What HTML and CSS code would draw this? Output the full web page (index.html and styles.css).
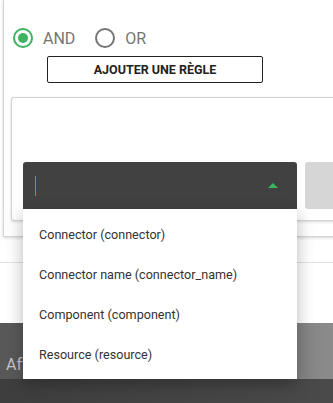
FILE: index.html
```html
<!DOCTYPE html>
<html lang="fr">
<head>
  <meta charset="UTF-8" />
  <meta name="viewport" content="width=device-width, initial-scale=1.0"/>
  <title>Règles</title>
  <link rel="stylesheet" href="styles.css">
</head>
<body>
  <div class="panel">
    <div class="combinator">
      <label class="radio checked"><span class="dot"></span>AND</label>
      <label class="radio"><span class="dot"></span>OR</label>
    </div>
    <button class="add-rule">AJOUTER UNE RÈGLE</button>

    <div class="rule-card">
      <div class="rule-row">
        <div class="field-select">
          <span class="caret"></span>
          <span class="arrow"></span>
          <ul class="menu">
            <li>Connector (connector)</li>
            <li>Connector name (connector_name)</li>
            <li>Component (component)</li>
            <li>Resource (resource)</li>
          </ul>
        </div>
        <div class="operator"></div>
      </div>
    </div>
  </div>

  <div class="divider"></div>

  <div class="footer-bar">
    <span class="footer-text">Aff</span>
  </div>
</body>
</html>
```

FILE: styles.css
```css
body { margin: 0; font-family: Roboto, "Liberation Sans", sans-serif; background: #fff; overflow: hidden; width: 333px; height: 403px; }

.panel { margin-left: 3px; width: 360px; border: 1px solid #d4d4d4; border-top: 0; box-shadow: 0 1px 3px rgba(0,0,0,0.15); padding: 28px 0 15px 7px; box-sizing: border-box; }

.combinator { display: flex; align-items: center; height: 20px; padding-left: 2px; }
.radio { display: flex; align-items: center; font-size: 16px; color: #757575; margin-right: 20px; }
.radio .dot { width: 20px; height: 20px; box-sizing: border-box; border: 2px solid #757575; border-radius: 50%; margin-right: 10px; position: relative; }
.radio.checked .dot { border-color: #3db35f; }
.radio.checked .dot::after { content: ''; position: absolute; left: 3px; top: 3px; width: 10px; height: 10px; border-radius: 50%; background: #3db35f; }

.add-rule { display: block; margin: 8px 0 0 36px; width: 216px; height: 27px; background: #fff; border: 1px solid #222; border-radius: 2px; font-family: Roboto, "Liberation Sans", sans-serif; font-weight: 700; font-size: 12.5px; color: #222; padding: 0; }

.rule-card { margin-top: 14px; border: 1px solid #d4d4d4; border-right: 0; border-radius: 3px 0 0 3px; box-shadow: 0 1px 3px rgba(0,0,0,0.15); padding: 64px 0 11px 11px; }
.rule-row { display: flex; gap: 8px; }

.field-select { position: relative; width: 274px; height: 47px; background: #414141; border-radius: 3px 3px 0 0; }
.caret { position: absolute; left: 12px; top: 14px; width: 1px; height: 20px; background: #3db35f; }
.arrow { position: absolute; left: 245px; top: 21px; border-left: 5px solid transparent; border-right: 5px solid transparent; border-bottom: 5px solid #3db35f; }

.operator { flex: 1; height: 47px; background: #d6d6d6; border-radius: 3px 0 0 3px; }

.menu { position: absolute; top: 47px; left: 0; width: 100%; margin: 0; padding: 6px 0 4px; list-style: none; background: #fff; box-shadow: 0 6px 16px rgba(0,0,0,0.28); z-index: 2; }
.menu li { height: 40px; line-height: 40px; padding-left: 16px; font-size: 12.6px; color: #333; }

.divider { margin-top: 25px; border-top: 1px solid #e2e2e2; }

.footer-bar { margin-top: 60px; height: 80px; background: linear-gradient(to right, #585858, #626262 55%, #8c8c8c) top / 100% 56px no-repeat, linear-gradient(to right, #3e3e3e, #4a4a4a); padding: 32px 0 0 6px; box-sizing: border-box; }
.footer-text { font-size: 16px; color: #c4c4c4; }
```
